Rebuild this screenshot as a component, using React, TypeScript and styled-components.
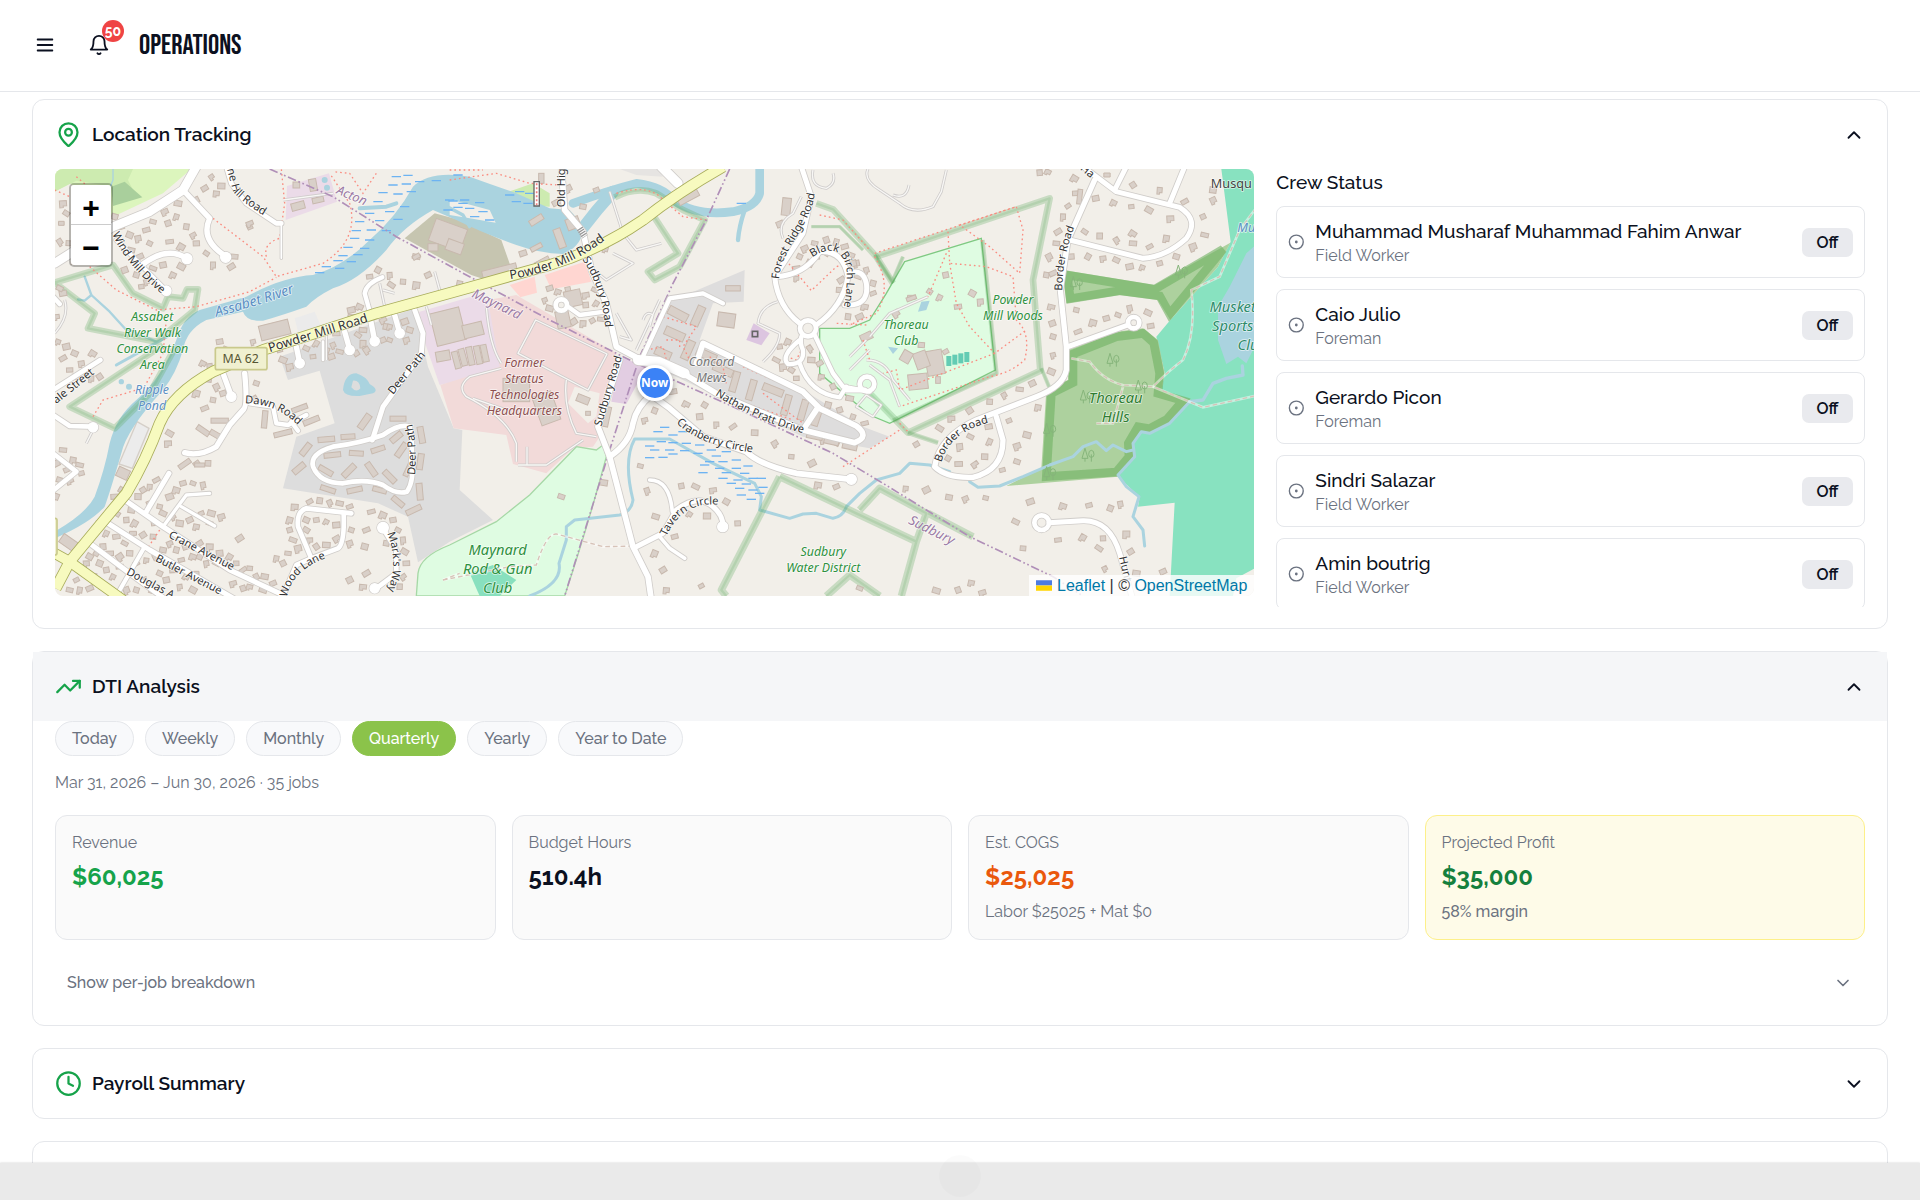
import React, { useState } from 'react';
import styled, { createGlobalStyle } from 'styled-components';
import { ChevronDown, ChevronUp, Clock, MapPin, TrendingUp } from 'lucide-react';

const ink = '#0b1020';
const muted = '#6b7280';
const line = '#e5e7eb';
const green = '#16a34a';

const GlobalStyle = createGlobalStyle`
  *, *::before, *::after { box-sizing: border-box; }
  body { margin: 0; background: #fff; color: ${ink}; font-family: Raleway, Inter, Lato, sans-serif; font-size: 19px; line-height: 27px; }
  button { font: inherit; color: inherit; background: none; border: 0; padding: 0; cursor: pointer; }
  h1, h2, h3, p, ul, dl, dd { margin: 0; padding: 0; }
  ul { list-style: none; }
`;

const Shell = styled.div`
  display: flex;
  flex-direction: column;
  height: 100vh;
  overflow: hidden;
`;

const TopBar = styled.header`
  display: flex;
  align-items: center;
  flex: none;
  min-height: 92px;
  padding: 0 34px 2px;
  border-bottom: 1px solid ${line};
`;

const IconButton = styled.button<{ $gap?: number }>`
  position: relative;
  display: flex;
  width: 22px;
  height: 22px;
  margin-right: ${p => p.$gap ?? 0}px;
`;

const Count = styled.span`
  position: absolute;
  left: 14px;
  bottom: 14px;
  width: 22px;
  height: 22px;
  border-radius: 11px;
  background: #ef4444;
  color: #fff;
  font-size: 14px;
  font-weight: 700;
  line-height: 22px;
  text-align: center;
`;

const PageTitle = styled.h1`
  padding-top: 2px;
  font-family: "Bebas Neue", "Liberation Sans Narrow", "Liberation Sans", sans-serif;
  font-size: 28px;
  font-weight: 400;
  line-height: 28px;
`;

const Main = styled.main`
  display: flex;
  flex: 1;
  flex-direction: column;
  gap: 22px;
  min-height: 0;
  padding: 7px 32px 0;
  overflow: hidden;
`;

const Card = styled.section`
  flex: none;
  border: 1px solid ${line};
  border-radius: 12px;
`;

const CardHeader = styled.button<{ $tinted?: boolean }>`
  display: flex;
  align-items: center;
  gap: 10px;
  width: 100%;
  min-height: 69px;
  padding: 0 22px;
  text-align: left;
  background: ${p => (p.$tinted ? '#f5f6f8' : 'transparent')};
`;

const CardTitle = styled.span`
  flex: 1;
  font-weight: 600;
`;

const CardBody = styled.div`
  padding: 0 22px 21px;
`;

const TrackingGrid = styled.div`
  display: grid;
  grid-template-columns: repeat(3, minmax(0, 1fr));
  align-items: start;
  gap: 22px;
`;

const MapFrame = styled.div`
  position: relative;
  grid-column: span 2;
  height: 427px;
  border-radius: 8px;
  overflow: hidden;
  background: #f2efe9;
  svg.tiles { display: block; width: 100%; height: 100%; }
`;

const ZoomControl = styled.div`
  position: absolute;
  top: 14px;
  left: 14px;
  display: flex;
  flex-direction: column;
  border: 2px solid rgba(0, 0, 0, 0.25);
  border-radius: 5px;
  background-clip: padding-box;
`;

const ZoomButton = styled.button`
  width: 40px;
  height: 40px;
  background: #fff;
  color: #000;
  font-family: "Liberation Sans", sans-serif;
  font-size: 30px;
  font-weight: 700;
  padding-top: 6px;
  line-height: 34px;
  &:first-child { border-bottom: 1px solid #ccc; border-radius: 3px 3px 0 0; }
  &:last-child { border-radius: 0 0 3px 3px; }
`;

const Marker = styled.div`
  position: absolute;
  top: 50%;
  left: 50%;
  width: 36px;
  height: 36px;
  margin: -18px 0 0 -18px;
  border: 3px solid #fff;
  border-radius: 50%;
  background: #3b82f6;
  box-shadow: 0 2px 6px rgba(0, 0, 0, 0.35);
  color: #fff;
  font-family: "Noto Sans", sans-serif;
  font-size: 12px;
  font-weight: 700;
  line-height: 30px;
  text-align: center;
`;

const Attribution = styled.div`
  position: absolute;
  right: 0;
  bottom: 0;
  padding: 0 7px;
  background: rgba(255, 255, 255, 0.8);
  color: #333;
  font-family: "Liberation Sans", sans-serif;
  font-size: 16px;
  line-height: 21px;
  a { color: #0078a8; text-decoration: none; }
  svg { margin-right: 5px; }
`;

const Crew = styled.div`
  display: flex;
  flex-direction: column;
  gap: 10px;
`;

const CrewHeading = styled.h3`
  font-size: 19px;
  font-weight: 500;
  line-height: 27px;
`;

const CrewList = styled.ul`
  display: flex;
  flex-direction: column;
  gap: 11px;
  height: 401px;
  overflow: hidden;
`;

const CrewItem = styled.li`
  display: flex;
  flex: none;
  align-items: center;
  gap: 9px;
  padding: 11px;
  border: 1px solid ${line};
  border-radius: 8px;
`;

const CrewText = styled.div`
  flex: 1;
`;

const CrewName = styled.p`
  font-weight: 500;
`;

const Small = styled.p`
  color: ${muted};
  font-size: 16px;
  line-height: 21px;
`;

const Status = styled.span`
  width: 51px;
  border-radius: 7px;
  background: #e9eaee;
  font-size: 16px;
  font-weight: 600;
  line-height: 29px;
  text-align: center;
`;

const Periods = styled.div`
  display: flex;
  flex-wrap: wrap;
  gap: 11px;
  margin-bottom: 16px;
`;

const Period = styled.button<{ $on: boolean }>`
  height: 35px;
  padding: 0 16px;
  border: 1px solid ${p => (p.$on ? '#8bc34a' : line)};
  border-radius: 18px;
  background: ${p => (p.$on ? '#8bc34a' : '#f8f9fb')};
  color: ${p => (p.$on ? '#fff' : muted)};
  font-size: 16px;
  font-weight: 500;
  line-height: 33px;
`;

const Stats = styled.dl`
  display: grid;
  grid-template-columns: repeat(4, minmax(0, 1fr));
  gap: 16px;
  margin: 22px 0;
`;

const Stat = styled.div<{ $highlight?: boolean }>`
  min-height: 125px;
  padding: 16px;
  border: 1px solid ${p => (p.$highlight ? '#fdf08a' : line)};
  border-radius: 12px;
  background: ${p => (p.$highlight ? '#fefbe8' : '#fafafa')};
`;

const StatLabel = styled.dt`
  color: ${muted};
  font-size: 16px;
  line-height: 21px;
`;

const StatValue = styled.dd<{ $color: string }>`
  padding: 8px 0;
  color: ${p => p.$color};
  font-size: 24px;
  font-weight: 700;
  line-height: 32px;
`;

const StatNote = styled.dd<{ $strong?: boolean }>`
  color: ${muted};
  font-size: 16px;
  font-weight: ${p => (p.$strong ? 500 : 400)};
  line-height: 21px;
`;

const Breakdown = styled.button`
  display: flex;
  align-items: center;
  justify-content: space-between;
  width: 100%;
  min-height: 42px;
  padding: 0 12px 1px;
  color: ${muted};
  font-size: 16px;
  font-weight: 500;
`;

const BottomBar = styled.footer`
  position: relative;
  flex: none;
  height: 37px;
  background: #eaeaea;
  box-shadow: 0 0 2px rgba(0, 0, 0, 0.2);
`;

const HomeDot = styled.span`
  position: absolute;
  top: -8px;
  left: 50%;
  width: 42px;
  height: 42px;
  margin-left: -21px;
  border-radius: 50%;
  background: rgba(0, 0, 0, 0.014);
`;

/* ---------- Map tiles: three tile columns, 1200 units apart ---------- */

type Shape = [dx: number, d: string, fill: string, stroke?: string];
type Road = [dx: number, d: string, width: number];

const areas: Shape[] = [
  [0, 'M15 27H425L340 100 190 170 60 70 15 95Z', '#dcf5bd'],
  [0, 'M15 27H250L235 60 250 90 190 80 80 62 15 95Z', '#cdebb0'],
  [0, 'M185 80L225 65 278 112 190 138Z', '#a9cf9c'],
  [0, 'M712 78L838 40 862 125 708 180Z', '#ebdbe8'],
  [0, 'M1065 235L1155 160 1230 180 1355 240 1385 325 1310 360 1265 345Z', '#c6c5b0'],
  [0, 'M690 590L1095 445 1135 620 1212 805 1238 810 1230 990 1330 1080 1200 1145 1105 1207 1075 1070 985 1030 700 985 740 830 855 790 810 632 715 660Z', '#dddddd'],
  [0, 'M1095 460L1300 400 1330 470 1355 625 1200 668 1170 675Z', '#ebdbe8'],
  [0, 'M735 475L795 455 815 500 745 515Z', '#ebebeb'],
  [0, 'M262 785L298 805 248 925 208 912Z', '#ececec', '#d5cfc8'],
  [1200, 'M115 420L200 405 500 580 495 650 450 830 430 860 370 865 290 940 190 912 170 825 12 805 -28 675 150 620Z', '#f2dad9'],
  [1200, 'M180 375L255 350 262 398 212 412Z', '#ffd6d1'],
  [1200, 'M285 345L405 305 425 365 305 388Z', '#ffd6d1'],
  [1200, 'M355 730L375 680 450 700 440 770 415 790Z', '#f2efe9'],
  [1200, 'M380 860L440 870 460 855 470 890Q420 1080 345 1308L-100 1308-95 1240Q-90 1190 0 1155L140 1085 240 1005Z', '#dffce2', '#a6d8a6'],
  [1200, 'M60 1240L130 1215 200 1260 150 1308H90Z', '#88e0be'],
  [1200, 'M650 430L885 330 882 425 790 430 750 540 900 620 1060 690 1240 800 1320 830 1260 865 1060 830 700 660 575 605Z', '#dedddd'],
  [1200, 'M510 590L590 620 530 732 485 725Z', '#e2cde2'],
  [1200, 'M912 490L960 520 935 556 890 540Z', '#dcc5e0'],
  [1200, 'M150 105L250 70 300 100 300 140 220 135Z', '#cdebb0'],
  [1200, 'M510 27H625L640 50 560 45Z', '#e6e4e2'],
  [2400, 'M165 305L395 235 437 630 120 790 60 765-90 640-90 505 0 505 60 480 110 400Z', '#dffce2', '#7fc982'],
  [2400, 'M1115 27H1215V1225L1160 1255 1150 1308H960L975 1028 865 1040 870 1010 805 950 855 890 850 840 880 815 1020 725 935 690 945 640 920 530 962 480 1105 320 1143 245Z', '#88e2c0'],
  [2400, 'M1215 258L1190 280 1140 380 1105 440 1105 540 1130 612 1165 590 1190 610 1215 560Z', '#aad3df'],
  [2400, 'M640 330L915 375 1142 248 1105 320 962 480 925 420 810 405 650 430Z', '#add19e'],
  [2400, 'M655 570L800 515 880 505 925 540 945 640 935 690 1025 720 960 790 900 820 870 815 850 850 855 890 805 950 470 978 575 925 590 690 655 660Z', '#add19e'],
  [0, 'M15 1115Q110 1060 135 1010 165 930 180 850 200 770 260 720 340 650 380 540 400 470 450 450L590 410Q700 350 790 345 880 320 960 240 1040 170 1090 80 1140 30 1260 50 1330 75 1400 100L1500 145 1560 150Q1590 180 1600 215 1590 262 1540 282 1470 280 1400 255 1290 215 1220 180L1150 150Q1060 200 1010 270 930 360 850 385 800 410 770 440 700 465 640 482 590 485 580 455L470 480Q410 510 400 570 380 640 340 690 230 810 215 880 180 1000 165 1040 120 1090 15 1135Z', '#aad3df'],
  [1200, 'M0 118L120 150 138 188 60 175 0 165Z', '#f2efe9'],
];

const forestEdges = [
  'M652 345L915 388 1120 268 960 462 930 408 810 392 662 416Z',
  'M670 582L800 530 880 520 912 548 930 640 925 700 1000 722 952 778 900 806 865 800 836 850 838 890 800 936 590 950 605 700 670 668Z',
];

const streams: Road[] = [
  [1200, 'M370 130Q480 90 560 70 640 80 670 120 740 170 850 155 920 140 930 100V27', 26],
  [1200, 'M885 150Q868 200 865 240', 13],
  [1200, 'M490 95Q440 150 395 210', 36],
  [1200, 'M240 1308Q340 1270 328 1210L350 1140V1100L375 1080 510 1065Q545 1055 550 1020 520 900 555 837H660L790 910 915 970 935 1010 930 1050 1020 1075 1060 1062 1100 1060 1150 1075Q1180 1070 1190 1040L1230 1000 1280 960 1350 940 1380 910 1440 915 1500 935', 9],
  [2400, 'M360 965L385 982 450 978 520 950 600 915 670 890 700 860 740 845 770 872 790 855 830 875 850 870', 9],
  [2400, 'M1020 725L1060 720 1090 670 1130 655 1180 645 1178 618', 10],
  [2400, 'M1020 725L960 790 900 820 875 815 850 850 855 890 805 945 830 980 868 1010 850 1070 880 1110 885 1158', 9],
  [0, 'M105 350L125 405 180 455 225 505 320 545', 7],
  [0, 'M85 418L105 422 125 405', 7],
  [0, 'M200 615L370 520', 9],
  [0, 'M190 27V60L180 85', 4],
  [0, 'M930 145L1010 140 1040 130', 12],
  [0, 'M1165 125L1240 165 1260 200', 10],
];

const reserves: Road[] = [
  [0, 'M15 368L190 315 250 400 340 445 355 410 400 415 412 388 445 388 435 450 320 545 115 505 135 460 15 368', 20],
  [0, 'M340 555L60 740 195 805 300 700 378 560', 20],
  [1200, 'M495 112Q560 78 620 100L700 150 765 180 690 320 615 360 595 335 685 280 600 150', 20],
  [1200, 'M1100 130L1150 148 1280 290 1330 370', 20],
  [1200, 'M1085 200H1170L1240 270', 10],
  [2400, 'M80 290L600 115 550 360 572 632 175 818 60 700', 20],
  [2400, 'M75 285L128 365 160 290', 12],
  [2400, 'M575 625L600 685', 12],
  [2400, 'M175 818L265 848', 14],
  [2400, 'M398 240L440 640 130 782', 14],
  [1200, 'M990 950L815 1290 830 1308M990 950L1220 1060 1400 1145M1230 1050L1290 985 1430 1060 1400 1145 1355 1308M1435 1060L1570 1130M1130 1308L1200 1245 1290 1308', 22],
];

const secondary: Road[] = [
  [0, 'M15 1180L60 1205 220 1320', 28],
  [0, 'M18 1285L60 1205 130 1120 230 1000Q290 900 330 790 370 700 490 635L640 570 980 460 1250 385 1500 315Q1650 270 1780 180 1880 100 2020 20', 30],
];

const roads: Road[] = [
  [0, 'M440 20L400 90 300 155 190 200 15 310', 26],
  [0, 'M400 90L480 175Q450 240 530 290', 16],
  [0, 'M530 20L545 70 590 130 680 190H695', 14],
  [0, 'M695 190V295', 5],
  [0, 'M270 320Q350 255 410 295', 16],
  [0, 'M200 240L350 392', 12],
  [0, 'M585 640Q595 740 580 750L540 795 500 860Q450 890 405 878', 16],
  [0, 'M520 640L545 708', 16],
  [0, 'M600 730L670 740 680 790 715 795 770 765M725 785L745 812', 13],
  [0, 'M740 560L750 608M885 515L900 568M960 465L975 542M1035 465L1050 518', 16],
  [0, 'M820 545V600', 8],
  [0, 'M962 460L945 400Q950 370 998 352', 13],
  [0, 'M1095 450L1120 520 1115 580 1000 740 968 840', 15],
  [0, 'M1080 800Q1050 790 1000 825 930 850 850 860 780 880 790 920 810 970 880 970 950 955 1000 975 1040 1005 1072 995 1095 960 1085 900 1090 830 1080 800', 14],
  [0, 'M225 1020L340 1100 540 1230 700 1305M290 1055L358 940M175 1090L300 1170 560 1320M120 1150L240 1240 350 1320', 15],
  [0, 'M285 1160L200 1308', 12],
  [0, 'M340 1100L410 1005 480 1000M395 1040L495 1098', 10],
  [0, 'M10 880L80 935 10 992M10 765L60 798 130 800M10 690L152 600', 14],
  [0, 'M905 1060L770 1045Q740 1055 745 1100L785 1195 865 1165Q885 1150 882 1062M785 1195L740 1215 700 1308', 14],
  [0, 'M1000 1105L1040 1170 1040 1240 980 1285', 14],
  [0, 'M10 410L30 432', 14],
  [1200, 'M335 20L345 150 400 215 425 330 470 430 500 560 575 600', 17],
  [1200, 'M565 600L625 605 705 640', 30],
  [1200, 'M700 640L800 700 1060 810 1215 848Q1262 830 1220 798L1110 745 1060 695 910 622 760 550 740 610M1060 810L1105 742', 17],
  [1200, 'M575 600L660 415 760 400 820 430', 13],
  [1200, 'M465 455L390 465 355 440', 13],
  [1200, 'M510 600L445 800 480 890 550 1160 595 1250 605 1320', 17],
  [1200, 'M480 890Q540 850 550 790 560 740 605 705L660 745 760 830 890 875Q930 915 1040 940L1205 958', 17],
  [1200, 'M560 1160L640 1120 680 1050Q745 1000 790 1040 820 1065 820 1098', 15],
  [1200, 'M600 960Q660 960 668 1055M630 1130L660 1165 705 1195', 11],
  [1200, 'M635 20L685 70', 28],
  [1200, 'M1055 20L1085 110 1060 220 975 350Q985 440 1050 490M1100 495Q1180 440 1195 350 1180 270 1110 275 1065 345 980 350M1185 435Q1260 440 1250 370 1240 325 1200 340', 15],
  [1200, 'M1095 525L1150 640 1180 680 1260 695M1050 540Q990 590 1015 612 1065 615 1060 570 1050 550 1055 530M1050 610Q1080 700 1170 712L1190 680', 13],
  [2400, 'M-10 690H45', 15],
  [2400, 'M735 60L655 240 632 390 650 560 650 630Q640 680 560 710L380 780Q270 830 255 920 290 955 370 952 460 930 460 840L440 770', 16],
  [2400, 'M660 240L880 295Q950 290 1010 235 1050 180 990 142L800 95 700 20M795 90L830 20M960 130L1005 20', 15],
  [2400, 'M655 560L835 495', 15],
  [2400, 'M598 1088L700 1082Q780 1080 810 1180L850 1320', 15],
];

const rings: [number, number, number][] = [
  [1535, 435, 17], [2275, 505, 24], [2452, 672, 22], [3252, 488, 17], [2976, 1088, 22],
];

const bulbs: [number, number, number][] = [
  [528, 292, 15], [412, 296, 15], [350, 392, 14], [545, 710, 14], [750, 610, 14], [900, 570, 14], [975, 544, 14], [1050, 520, 14],
  [130, 802, 14], [1000, 1103, 16], [975, 1285, 14], [2405, 958, 15], [2019, 1100, 15],
];

const lanes: [number, string][] = [
  [1200, 'M205 580L258 480 472 582 415 690Z'],
  [1200, 'M110 440Q120 560 155 610M155 625L60 650Q20 680 50 710 170 770 200 850V905M70 715L170 750M350 660Q340 740 380 820L440 830M232 915V860M205 915H290L400 840'],
  [1200, 'M480 95L520 220 560 270 635 250M420 320L470 360 550 310 490 280M500 460L545 540 510 530M560 570L630 420M580 480Q590 450 610 465L600 500'],
  [1200, 'M985 425Q930 440 925 490L990 520Q990 560 940 605M1000 235Q980 190 1030 160L1055 110M1090 30Q1080 80 1130 85 1160 70 1150 40'],
  [2400, 'M55 27Q40 60 90 90L150 130Q190 165 250 140L275 95 290 30M130 105Q170 120 178 75M0 590L50 540M0 630L60 570'],
  [2400, 'M50 600Q110 600 130 660L180 720M60 615L120 660 150 740M235 410L120 460 60 530M20 740L50 705 95 735 70 770Z'],
  [0, 'M700 120L850 100M990 370L1005 440M1130 440L1145 495M1155 335L1170 390M45 420Q60 470 15 520M110 850L130 810M1000 390L1035 400M830 500V600'],
];

const footpaths: [number, string][] = [
  [0, 'M490 175L640 290 680 350 820 310Q930 240 900 130L840 40'],
  [0, 'M650 290Q640 250 690 235L705 130 695 27'],
  [0, 'M120 320L200 390 320 450 440 440 600 395 680 352'],
  [0, 'M980 40L940 100 900 40 850 35M80 50L110 75M15 90L60 110M350 480L340 580 290 670M130 770L160 720 260 690M330 1110L290 1170'],
  [1200, 'M0 60L140 40 240 70 330 75M0 30H100M500 100Q600 70 640 120L700 170 770 180'],
  [1200, 'M1000 290L1085 392 1160 320 1190 310M1110 165L1180 180 1260 270M590 570L640 560 650 600M640 470L740 500 700 560 720 600M650 540H690V570M780 590L820 620 830 670M880 620L1060 700M940 700L1060 790M860 720L1030 780'],
  [1200, 'M1180 920L1350 810'],
  [1200, 'M1250 495L1160 490M1010 590L1040 600 1060 560'],
  [2400, 'M75 280L500 140 520 210 510 340 420 260 330 195 500 140'],
  [2400, 'M295 215L300 310 410 320 490 350 500 480Q545 520 525 600 480 640 420 650L150 740'],
  [2400, 'M300 310L320 430 360 500 435 580 530 510M290 280L235 410M435 580L150 690 140 630 100 640'],
  [2400, 'M75 290Q130 380 80 460L0 495M40 540L60 600M150 790L180 820'],
];

const tracks: [number, string][] = [
  [2400, 'M665 595L720 605Q760 660 820 675L910 680Q960 630 1000 600 1040 520 1025 390L1110 350 1170 210 1215 150'],
  [2400, 'M1215 708L1060 742 910 680M740 790L790 790 820 680'],
  [1200, 'M-20 1260L180 1220 260 1215Q290 1120 320 1122L460 1160 560 1158'],
  [0, 'M1180 1260L1230 1240'],
];

const borders = [
  'M660 27L850 110 1040 230 1250 345 1500 480 1760 610 2050 740 2350 880 2500 970 2760 1130 3010 1250 3100 1308',
  'M2040 27L1970 180 1870 370 1770 590 1680 870 1545 1308',
];

const marsh =
  '1040 50 1075 46 1030 75 1070 72 1110 65 1000 98 1045 102 1085 95 985 125 960 160 1020 155 1065 140 930 185 990 182 1045 178 920 212 965 210 1010 212 915 235 960 240 895 262 945 265 880 287 925 284 865 302 905 305 830 320 870 325 810 338 1160 62 1200 120 1240 130 1195 150 1225 45 ' +
  '1210 123 1245 120 1290 128 1260 145 1300 155 1225 142 1275 170 1320 180 1380 105 1410 95 1440 100 1400 125 1435 130 ' +
  '1845 802 1870 825 1825 815 1900 815 1800 858 1835 845 1870 848 1910 850 1815 870 1860 870 1905 872 1800 893 1840 892 1870 882 1950 855 1945 880 1985 870 2030 875 2000 888 2060 900 1980 905 2020 905 2095 918 1965 915 2010 925 2060 925 1960 938 2030 938 2085 940 2020 955 2065 960 2110 955 2045 970 2090 972 2135 955 2070 985 2110 990 2140 982 2075 1005 2105 1018 2130 1000 2075 130';

const houses =
  '485 50 515 78 465 85 500 100 440 120 385 130 345 155 310 185 355 190 380 170 290 210 240 225 265 235 300 250 360 245 395 260 440 250 470 280 490 315 545 320 555 290 430 225 410 200 270 290 245 270 225 330 260 345 290 365 310 325 340 315 370 345 275 380 395 320 40 130 50 160 35 190 30 245 60 250 105 280 75 300 600 200 1100 290 600 190 195 170 215 200 ' +
  '25 545 50 560 75 580 95 610 105 640 80 650 130 580 60 630 150 650 125 655 40 595 475 660 500 680 490 720 465 745 440 700 520 700 620 670 610 545 530 570 510 545 460 610 480 620 360 820 355 850 440 910 475 910 615 715 ' +
  '40 870 20 910 70 900 50 930 90 915 60 960 30 960 95 940 20 1010 40 400 30 385 20 470 215 990 195 1010 240 990 265 1010 280 990 300 980 320 960 245 1050 300 1030 330 1040 360 1010 380 990 400 970 430 970 460 975 340 1060 315 1090 255 1090 230 1080 200 1060 250 1120 280 1125 310 1130 370 1070 390 1090 420 1080 440 1100 455 1060 485 1060 515 1070 480 1090 ' +
  '150 1090 170 1120 200 1130 225 1150 160 1160 140 1180 180 1180 210 1190 240 1180 260 1210 290 1200 320 1190 340 1170 360 1150 380 1170 410 1160 430 1190 395 1200 450 1190 470 1210 500 1210 510 1180 540 1190 560 1210 580 1230 480 1160 450 1150 600 1225 620 1250 645 1250 670 1270 600 1280 580 1285 640 1290 550 1270 150 1210 170 1230 190 1250 210 1220 120 1190 110 1210 100 1240 130 1250 150 1270 180 1290 80 1260 90 1290 120 1285 60 1290 230 1290 260 1290 280 1260 310 1290 350 1260 330 1240 390 1280 430 1290 370 1230 410 1250 440 1240 ' +
  '570 1135 735 1040 780 1025 810 1022 840 1028 870 1030 900 1040 720 1080 720 1110 730 1140 745 1165 770 1080 800 1080 830 1085 860 1095 770 1110 780 1140 800 1160 830 1155 860 1135 715 1180 700 1210 680 1195 950 1110 945 1160 900 1150 905 1110 965 1055 1000 1065 1030 1080 1045 1110 1060 1140 1065 1175 1070 1210 1060 1250 1050 1280 950 1240 940 1280 900 1260 1010 1150 ' +
  '850 555 870 575 845 590 830 570 690 570 700 600 720 620 770 565 790 590 800 550 860 520 925 525 940 550 920 580 940 510 1000 480 1010 500 1000 540 1020 500 1065 485 1080 510 1070 540 1020 540 905 450 930 440 960 350 985 330 1020 345 1025 375 905 470 950 570 1060 365 1100 290 1100 375 1135 345 1230 370 ' +
  '1485 420 1500 445 1500 385 1525 395 1555 390 1580 405 1608 405 1635 390 1608 435 1640 430 1545 478 1572 485 1600 490 1628 482 1655 478 1555 85 1600 140 1640 90 1668 265 1420 280 1535 1010 ' +
  '1785 780 1815 752 1870 695 1910 732 1950 770 1965 735 2000 793 2050 800 2115 818 2175 850 2225 890 2287 910 2305 975 2360 980 1772 918 1792 992 1818 1070 1875 1130 1815 1180 1895 978 1938 980 1990 990 2030 1025 2064 1090 1920 1062 1972 1068 1840 1230 1850 1290 1955 1278 1662 968 ' +
  '2265 265 2295 250 2330 240 2360 245 2385 260 2405 285 2420 310 2250 290 2240 325 2280 310 2300 290 2330 280 2240 355 2375 360 2370 390 2370 425 2395 470 2430 470 2445 440 2470 400 2470 370 2450 330 2425 350 2410 310 2215 545 2190 560 2180 600 2200 620 2225 630 2240 655 2280 565 2285 600 2310 610 2315 650 2350 680 2400 715 2190 190 ' +
  '2335 735 2370 750 2410 770 2445 790 2290 820 2320 840 2360 850 2400 855 ' +
  '3075 55 3078 100 3055 138 3040 170 3025 215 3020 250 2998 290 2990 345 3010 340 3005 440 3008 490 3010 530 3010 585 3005 635 3138 115 3192 128 3245 140 3298 150 3362 175 3105 215 3150 228 3200 240 3250 250 3300 260 3350 235 3460 170 3465 225 3430 260 3380 290 3330 310 3278 322 3240 320 3200 300 3160 295 3115 290 3062 290 3250 220 3172 45 3250 75 3330 90 3405 125 3490 90 3490 120 3080 450 3085 515 3130 488 3170 475 3205 465 3240 445 3295 458 3303 498 2995 35 2970 38 ' +
  '2670 805 2705 775 2760 752 2820 725 2863 705 2910 688 2948 670 2965 742 2878 782 2932 825 2902 858 2902 905 2858 930 2820 845 2817 800 2762 830 2730 860 2695 895 2727 912 2775 912 2805 890 2600 853 2568 985 2630 990 2698 1012 2747 1016 2808 1014 2942 1025 3040 1038 3118 1036 3182 1045 3212 1032 2898 1085 3025 1140 3100 1132 3160 1135 3148 1165 3230 1122 3243 1175 2920 1165 3165 1225 3260 1240 3340 1235 2765 1268 2725 1290 2660 1292 2798 1298 2430 1285 ' +
  '2688 345 2670 412 2725 440 2768 400 2792 425 2640 395 2585 412 2538 460 2615 555 2688 575';

const blocks =
  '675 510 90 45 -14 1195 225 100 70 20 1150 262 30 22 0 1195 500 90 100 -14 1180 588 42 30 -10 1220 600 18 52 -15 1240 592 18 52 -15 1262 588 18 55 -12 1285 585 18 55 -12 1305 580 18 52 -12 ' +
  '790 75 22 36 -10 745 138 40 22 -15 740 75 20 18 0 805 120 34 16 -12 220 940 36 30 25 60 1150 60 30 35 ' +
  '945 785 20 50 35 1045 776 48 15 0 830 838 50 16 -5 895 830 42 15 -4 768 868 18 42 38 848 885 50 15 -6 920 880 42 15 4 985 868 42 15 -18 748 925 18 42 50 828 932 46 16 30 898 932 18 48 45 965 928 18 46 -35 1020 950 18 46 -45 1055 870 18 48 35 1040 832 18 40 50 1115 825 18 50 -10 1112 905 18 48 8 1110 995 18 50 -5 1092 1050 48 16 -25 835 988 46 15 18 915 990 46 15 -12 990 990 42 15 15 1045 1025 42 16 40 1075 930 15 40 25 645 778 16 52 5 510 782 52 15 0 460 812 42 16 35 500 825 42 16 30 405 912 40 15 -35 750 745 48 15 -20 785 782 50 16 -22 700 820 55 15 -14 450 915 30 12 0 ' +
  '1350 335 105 28 -14 1480 310 46 26 -28 1530 235 22 60 -20 1570 190 40 34 -20 1460 180 44 18 -32 1525 125 36 16 -28 1460 262 36 14 -28 1570 415 50 48 -12 1540 478 40 52 -12 1400 690 80 70 0 1490 745 60 90 -20 1600 718 38 22 22 1670 770 20 60 12 1615 760 14 12 0 ' +
  '1885 462 62 26 28 1945 468 24 62 24 1875 522 62 26 24 1915 570 24 60 24 1840 580 50 24 24 1970 585 62 24 24 2030 480 52 42 8 2050 385 44 16 0 2020 630 62 22 24 2055 665 20 62 16 2105 690 20 62 16 2170 690 64 22 22 2210 735 20 62 16 2260 750 20 62 16 2300 775 20 46 18 1915 110 66 26 -28 1475 55 16 30 0 2210 140 26 52 6 ' +
  '2655 608 52 74 -10 2615 600 40 50 -20 2605 665 58 46 -6 2570 590 30 34 30 2665 660 14 20 0 2450 530 36 22 -25 2585 415 30 12 -20 3090 110 14 44 6 ' +
  '1270 510 60 40 -14 1215 260 50 34 20 2295 828 48 18 12 2345 845 44 16 12 2400 860 44 16 12';

const toNumbers = (list: string) => list.trim().split(/\s+/).map(Number);

const chunk = (list: string, size: number) => {
  const n = toNumbers(list);
  return Array.from({ length: Math.floor(n.length / size) }, (_, i) => n.slice(i * size, i * size + size));
};

type Curved = [id: string, d: string, text: string, size: number, color: string, italic?: boolean];

const curved: Curved[] = [
  ['a1', 'M532 28L550 95Q590 140 700 200', 'ne Hill Road', 33, '#333'],
  ['a2', 'M188 222Q230 320 350 412', 'Wind Mill Drive', 33, '#333'],
  ['a3', 'M500 470Q620 440 770 385', 'Assabet River', 42, '#5c8fc4', true],
  ['a4', 'M660 577L980 478', 'Powder Mill Road', 38, '#333'],
  ['a5', 'M20 732L140 636', 'ale Street', 33, '#333'],
  ['a6', 'M586 730Q690 730 760 812', 'Dawn Road', 33, '#333'],
  ['a7', 'M1030 705L1150 560', 'Deer Path', 33, '#333'],
  ['a8', 'M1096 945Q1105 850 1080 760', 'Deer Path', 33, '#333'],
  ['a9', 'M355 1132L580 1248', 'Crane Avenue', 33, '#333'],
  ['a10', 'M315 1202L540 1320', 'Butler Avenue', 33, '#333'],
  ['a11', 'M228 1242L420 1345', 'Douglas A', 33, '#333'],
  ['a12', 'M712 1312Q725 1230 840 1190', 'Wood Lane', 33, '#333'],
  ['a13', 'M1012 1120Q1050 1210 1010 1300', "Mark's Way", 33, '#333'],
  ['a14', 'M858 100L970 148', 'Acton', 38, '#9a7aa5', true],
  ['b1', 'M1264 410L1430 490', 'Maynard', 40, '#9a7aa5', true],
  ['b2', 'M1382 358Q1560 330 1690 222', 'Powder Mill Road', 38, '#333'],
  ['b3', 'M1545 142V10', 'Old Hig', 33, '#333'],
  ['b4', 'M1598 298Q1660 390 1668 520', 'Sudbury Road', 33, '#333'],
  ['b5', 'M1655 800L1720 580', 'Sudbury Road', 33, '#333'],
  ['b6', 'M1996 705Q2120 785 2270 822', 'Nathan Pratt Drive', 33, '#333'],
  ['b7', 'M1880 788Q1950 860 2130 880', 'Cranberry Circle', 33, '#333'],
  ['b8', 'M1850 1130Q1900 1020 2010 1035', 'Tavern Circle', 33, '#333'],
  ['b9', 'M2188 358C2195 260 2290 200 2298 80', 'Forest Ridge Road', 33, '#333'],
  ['b10', 'M2288 292C2350 250 2385 280 2391 330Q2394 380 2382 445', 'Black Birch Lane', 33, '#333'],
  ['c1', 'M3038 392Q3038 290 3078 190', 'Border Road', 33, '#333'],
  ['c2', 'M2675 908Q2700 820 2810 790', 'Border Road', 33, '#333'],
  ['c3', 'M2574 1090L2740 1172', 'Sudbury', 40, '#9a7aa5', true],
  ['c4', 'M3208 1192L3240 1330', 'Hunt', 33, '#333'],
  ['c5', 'M3090 28L3132 62', 'Ha', 33, '#333'],
];

type Block = [x: number, y: number, gap: number, size: number, color: string, lines: string[], italic?: boolean];

const labels: Block[] = [
  [308, 483, 48, 37, '#2e9140', ['Assabet', 'River Walk', 'Conservation', 'Area'], true],
  [307, 702, 48, 37, '#5c8fc4', ['Ripple', 'Pond'], true],
  [1424, 621, 48, 37, '#8d4f4f', ['Former', 'Stratus', 'Technologies', 'Headquarters'], true],
  [1986, 619, 48, 37, '#777', ['Concord', 'Mews'], true],
  [1344, 1184, 57, 44, '#2e9140', ['Maynard', 'Rod & Gun', 'Club'], true],
  [2321, 1188, 48, 37, '#2e9140', ['Sudbury', 'Water District'], true],
  [2569, 507, 48, 37, '#2e9140', ['Thoreau', 'Club'], true],
  [2890, 432, 48, 37, '#2e9140', ['Powder', 'Mill Woods'], true],
  [3198, 728, 57, 44, '#2e7d32', ['Thoreau', 'Hills'], true],
  [3545, 84, 50, 38, '#444', ['Musqu']],
  [3590, 216, 50, 38, '#5c8fc4', ['Mu'], true],
  [3549, 456, 57, 44, '#2e8b6b', ['Musket'], true],
  [3549, 513, 57, 44, '#2e8b6b', ['Sports'], true],
  [3595, 570, 57, 44, '#2e8b6b', ['Clu'], true],
];

const place = (dx: number) => (dx ? `translate(${dx})` : undefined);

function MapTiles() {
  return (
    <svg className="tiles" viewBox="15 27 3600 1281" preserveAspectRatio="xMidYMid slice" role="img" aria-label="Street map of Maynard and Sudbury" fontFamily='"Noto Sans", sans-serif'>
      {areas.map(([dx, d, fill, stroke], i) => (
        <path key={i} d={d} transform={place(dx)} fill={fill} stroke={stroke} strokeWidth={stroke ? 4 : 0} />
      ))}
      <g transform="translate(2400)" fill="none" stroke="#6fb062" strokeOpacity="0.6" strokeWidth="26">
        {forestEdges.map(d => <path key={d} d={d} />)}
      </g>
      <g fill="none" stroke="#aad3df" strokeLinejoin="round" strokeLinecap="round">
        {streams.map(([dx, d, w], i) => <path key={i} d={d} transform={place(dx)} strokeWidth={w} />)}
      </g>
      <path d="M880 690Q885 640 920 640 950 650 960 672 990 690 970 700L930 708Q885 710 880 690ZM905 682Q920 700 932 685 930 660 910 662Z" fill="#aad3df" fillRule="evenodd" />
      <g fill="#aad3df">
        <circle cx="825" cy="60" r="9" /><circle cx="832" cy="83" r="9" /><circle cx="215" cy="665" r="8" /><circle cx="238" cy="680" r="9" />
        <path d="M2605 455L2615 425 2640 422 2630 450Z" /><path d="M2515 560L2545 565 2530 582Z" />
      </g>
      <g fill="none" stroke="#5aa85a" strokeOpacity="0.27" strokeLinejoin="round">
        {reserves.map(([dx, d, w], i) => <path key={i} d={d} transform={place(dx)} strokeWidth={w} />)}
      </g>
      <g fill="none" stroke="#5aa85a" strokeOpacity="0.18" strokeLinejoin="round" strokeWidth="7">
        {reserves.map(([dx, d], i) => <path key={i} d={d} transform={place(dx)} />)}
      </g>
      <g stroke="#6db3f2" strokeWidth="4">
        {chunk(marsh, 2).map(([x, y], i) => <path key={i} d={`M${x - 14} ${y}h28`} />)}
      </g>
      <g fill="#d9d0c9" stroke="#c8b9ae" strokeWidth="3">
        {chunk(houses, 2).map(([x, y], i) => {
          const w = 15 + (i * 7) % 9;
          const h = 12 + (i * 5) % 7;
          return <path key={i} d={i % 3 ? `M${-w / 2} ${-h / 2}h${w}v${h}h${-w}z` : `M${-w / 2} ${-h / 2}h${w}v${h}h${-w / 2}v5h${-w / 2}z`} transform={`translate(${x} ${y}) rotate(${(i * 37) % 70 - 35})`} />;
        })}
        {chunk(blocks, 5).map(([x, y, w, h, a], i) => (
          <rect key={i} x={x - w / 2} y={y - h / 2} width={w} height={h} transform={`rotate(${a} ${x} ${y})`} />
        ))}
      </g>
      <g fill="#63ccb4">
        {[0, 1, 2, 3].map(n => <rect key={n} x={2690 + n * 18} y={588 - n * 4} width="15" height="30" />)}
      </g>
      <g fill="none" stroke="#fff" strokeOpacity="0.5" strokeWidth="8">
        {tracks.map(([dx, d], i) => <path key={i} d={d} transform={place(dx)} />)}
      </g>
      <g fill="none" stroke="#d7c3b8" strokeWidth="4" strokeDasharray="14 9">
        {tracks.map(([dx, d], i) => <path key={i} d={d} transform={place(dx)} />)}
      </g>
      <g fill="none" stroke="#cfcccb" strokeWidth="9" strokeLinejoin="round">
        {lanes.map(([dx, d], i) => <path key={i} d={d} transform={place(dx)} />)}
      </g>
      <g fill="none" stroke="#f8f7f5" strokeWidth="4" strokeLinejoin="round">
        {lanes.map(([dx, d], i) => <path key={i} d={d} transform={place(dx)} />)}
      </g>
      <g fill="none" stroke="#fa8c80" strokeWidth="4" strokeDasharray="5 9">
        {footpaths.map(([dx, d], i) => <path key={i} d={d} transform={place(dx)} />)}
      </g>
      <g fill="none" stroke="#b08fb8" strokeWidth="5" strokeDasharray="26 8 5 8 5 8">
        {borders.map(d => <path key={d} d={d} />)}
      </g>
      <g fill="none" stroke="#d0cdca" strokeLinejoin="round" strokeLinecap="round">
        {roads.map(([dx, d, w], i) => <path key={i} d={d} transform={place(dx)} strokeWidth={w + 5} />)}
        {rings.map(([x, y, r]) => <circle key={x} cx={x} cy={y} r={r} strokeWidth="19" />)}
        {bulbs.map(([x, y, r]) => <circle key={`${x}-${y}`} cx={x} cy={y} r={r} strokeWidth="8" />)}
      </g>
      <g fill="none" stroke="#fff" strokeLinejoin="round" strokeLinecap="round">
        {roads.map(([dx, d, w], i) => <path key={i} d={d} transform={place(dx)} strokeWidth={w} />)}
        {rings.map(([x, y, r]) => <circle key={x} cx={x} cy={y} r={r} strokeWidth="14" />)}
        {bulbs.map(([x, y, r]) => <circle key={`${x}-${y}`} cx={x} cy={y} r={r} fill="#fff" strokeWidth="4" />)}
      </g>
      <g fill="none" stroke="#a9ad5c" strokeLinejoin="round">
        {secondary.map(([dx, d, w], i) => <path key={i} d={d} transform={place(dx)} strokeWidth={w + 5} />)}
      </g>
      <g fill="none" stroke="#f7fabf" strokeLinejoin="round">
        {secondary.map(([dx, d, w], i) => <path key={i} d={d} transform={place(dx)} strokeWidth={w} />)}
      </g>
      <path d="M1590 205L1606 230" stroke="#999" strokeWidth="20" strokeDasharray="4 3" />
      <path d="M1453 65H1469V138H1453Z" fill="#fff" stroke="#666" strokeWidth="4" />
      <path d="M1461 70V135" stroke="#f08080" strokeWidth="5" strokeDasharray="6 6" />
      <rect x="2108" y="514" width="16" height="16" fill="none" stroke="#666" strokeWidth="5" />
      <g fill="none" stroke="#86b57b" strokeWidth="3">
        {chunk('3080 370 3190 600 3275 680 3115 885 3000 940 3395 335 3000 810 3110 710', 2).map(([x, y]) => (
          <path key={`${x}-${y}`} d={`M${x - 18} ${y + 10}l9-30 9 30zM${x - 9} ${y + 10}v10M${x + 10} ${y + 20}v-22m-8 0a8 12 0 1 1 16 0a8 9 0 1 1-16 0`} />
        ))}
      </g>
      <g>
        <rect x="497" y="563" width="155" height="66" rx="6" fill="#f0f0d0" stroke="#c9c98c" strokeWidth="5" />
        <text x="573" y="609" fontSize="37" fill="#555533" textAnchor="middle">MA 62</text>
        <rect x="-40" y="1075" width="62" height="110" rx="6" fill="#f0f0d0" stroke="#c9c98c" strokeWidth="5" />
      </g>
      <g stroke="#fff" strokeOpacity="0.65" strokeWidth="5" paintOrder="stroke" strokeLinejoin="round">
        {curved.map(([id, d, text, size, color, italic]) => (
          <React.Fragment key={id}>
            <path id={`street-${id}`} d={d} fill="none" stroke="none" />
            <text fontSize={size} fill={color} fontStyle={italic ? 'italic' : 'normal'}>
              <textPath href={`#street-${id}`}>{text}</textPath>
            </text>
          </React.Fragment>
        ))}
        {labels.map(([x, y, gap, size, color, lines, italic]) =>
          lines.map((text, i) => (
            <text key={text + x} x={x} y={y + i * gap} fontSize={size} fill={color} textAnchor="middle" fontStyle={italic ? 'italic' : 'normal'}>{text}</text>
          )),
        )}
      </g>
    </svg>
  );
}

function MenuIcon() {
  return (
    <svg width="22" height="22" viewBox="0 0 24 24" fill="none" stroke="currentColor" strokeWidth="2" strokeLinecap="round" aria-hidden>
      <path d="M4 6h16M4 12h16M4 18h16" />
    </svg>
  );
}

function BellIcon() {
  return (
    <svg width="22" height="22" viewBox="0 0 24 24" fill="none" stroke="currentColor" strokeWidth="2" strokeLinecap="round" strokeLinejoin="round" aria-hidden>
      <path d="M6 8a6 6 0 0 1 12 0c0 7 3 9 3 9H3s3-2 3-9" />
      <path d="M10.3 21a1.94 1.94 0 0 0 3.4 0" />
    </svg>
  );
}

function StatusDot() {
  return (
    <svg width="18" height="18" viewBox="0 0 26 26" fill="none" stroke={muted} strokeWidth="2" aria-hidden>
      <circle cx="12" cy="13" r="10" />
      <circle cx="12" cy="13" r="1" />
    </svg>
  );
}

const crew = [
  { name: 'Muhammad Musharaf Muhammad Fahim Anwar', role: 'Field Worker' },
  { name: 'Caio Julio', role: 'Foreman' },
  { name: 'Gerardo Picon', role: 'Foreman' },
  { name: 'Sindri Salazar', role: 'Field Worker' },
  { name: 'Amin boutrig', role: 'Field Worker' },
];

const periods = ['Today', 'Weekly', 'Monthly', 'Quarterly', 'Yearly', 'Year to Date'];

const stats = [
  { label: 'Revenue', value: '$60,025', color: green },
  { label: 'Budget Hours', value: '510.4h', color: ink },
  { label: 'Est. COGS', value: '$25,025', color: '#ea580c', note: 'Labor $25025 + Mat $0' },
  { label: 'Projected Profit', value: '$35,000', color: '#15803d', note: '58% margin', highlight: true },
];

export default function App() {
  const [period, setPeriod] = useState('Quarterly');

  return (
    <Shell>
      <GlobalStyle />
      <TopBar>
        <IconButton $gap={32} aria-label="Menu"><MenuIcon /></IconButton>
        <IconButton $gap={29} aria-label="Notifications">
          <BellIcon />
          <Count>50</Count>
        </IconButton>
        <PageTitle>OPERATIONS</PageTitle>
      </TopBar>

      <Main>
        <Card>
          <CardHeader aria-expanded>
            <MapPin size={27} color={green} />
            <CardTitle>Location Tracking</CardTitle>
            <ChevronUp size={22} />
          </CardHeader>
          <CardBody>
            <TrackingGrid>
              <MapFrame>
                <MapTiles />
                <ZoomControl>
                  <ZoomButton aria-label="Zoom in">+</ZoomButton>
                  <ZoomButton aria-label="Zoom out">−</ZoomButton>
                </ZoomControl>
                <Marker>Now</Marker>
                <Attribution>
                  <svg width="16" height="11" viewBox="0 0 12 8" aria-hidden>
                    <path fill="#4c7be1" d="M0 0h12v4H0z" />
                    <path fill="#ffd500" d="M0 4h12v4H0z" />
                  </svg>
                  <a href="#leaflet">Leaflet</a> | © <a href="#osm">OpenStreetMap</a>
                </Attribution>
              </MapFrame>
              <Crew>
                <CrewHeading>Crew Status</CrewHeading>
                <CrewList>
                  {crew.map(member => (
                    <CrewItem key={member.name}>
                      <StatusDot />
                      <CrewText>
                        <CrewName>{member.name}</CrewName>
                        <Small>{member.role}</Small>
                      </CrewText>
                      <Status>Off</Status>
                    </CrewItem>
                  ))}
                </CrewList>
              </Crew>
            </TrackingGrid>
          </CardBody>
        </Card>

        <Card>
          <CardHeader $tinted aria-expanded>
            <TrendingUp size={27} color={green} />
            <CardTitle>DTI Analysis</CardTitle>
            <ChevronUp size={22} />
          </CardHeader>
          <CardBody>
            <Periods>
              {periods.map(name => (
                <Period key={name} $on={name === period} onClick={() => setPeriod(name)}>{name}</Period>
              ))}
            </Periods>
            <Small>Mar 31, 2026 – Jun 30, 2026 · 35 jobs</Small>
            <Stats>
              {stats.map(stat => (
                <Stat key={stat.label} $highlight={stat.highlight}>
                  <StatLabel>{stat.label}</StatLabel>
                  <StatValue $color={stat.color}>{stat.value}</StatValue>
                  {stat.note && <StatNote $strong={stat.highlight}>{stat.note}</StatNote>}
                </Stat>
              ))}
            </Stats>
            <Breakdown aria-expanded={false}>
              Show per-job breakdown
              <ChevronDown size={20} />
            </Breakdown>
          </CardBody>
        </Card>

        <Card>
          <CardHeader aria-expanded={false}>
            <Clock size={27} color={green} />
            <CardTitle>Payroll Summary</CardTitle>
            <ChevronDown size={22} />
          </CardHeader>
        </Card>

        <Card>
          <CardHeader aria-label="Next section" />
        </Card>
      </Main>

      <BottomBar><HomeDot /></BottomBar>
    </Shell>
  );
}
